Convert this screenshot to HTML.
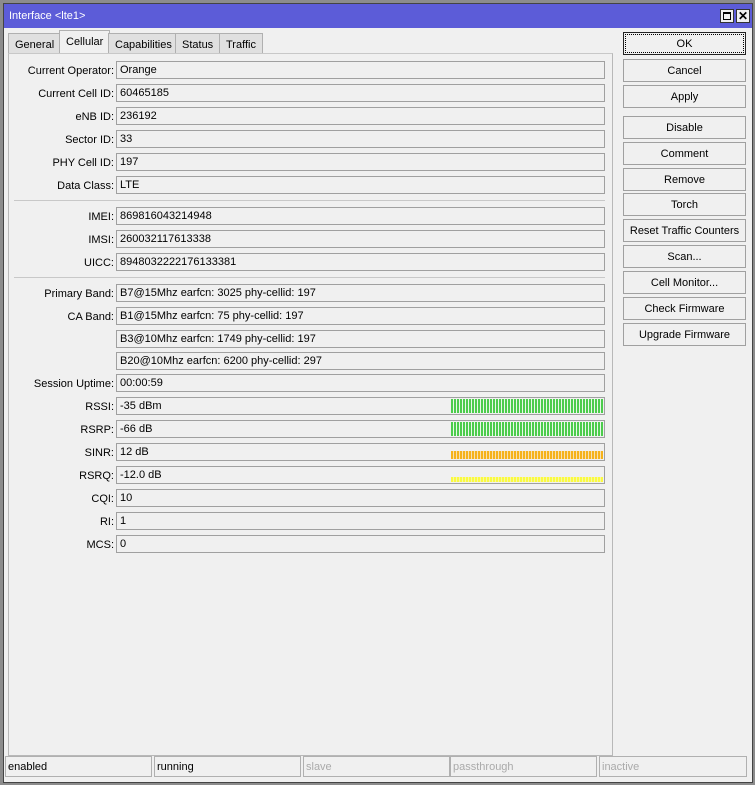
<!DOCTYPE html>
<html><head><style>
*{box-sizing:border-box;margin:0;padding:0}
body{width:755px;height:785px;background:#8c8c8c;font-family:"Liberation Sans",sans-serif;font-size:11px;color:#000;position:relative;overflow:hidden}
.win{position:absolute;left:3px;top:3px;width:750px;height:780px;background:#f0f0f0;border:1px solid #444}
.title{position:absolute;left:0;top:0;width:748px;height:24px;background:#5c5cd8;color:#fff;font-size:11px;padding:6px 0 0 5px}
.tb{position:absolute;top:5px;width:14px;height:14px;background:#f0f0f0;border:1px solid #333}
.tab{position:absolute;top:29px;height:21px;background:#e0e0e0;border:1px solid #b0b0b0;border-bottom:none;padding:5px 6px 0;font-size:11px}
.tab.act{top:26px;height:24px;background:#f0f0f0;padding-top:5px}
.panel{position:absolute;left:4px;top:49px;width:605px;height:703px;border:1px solid #b8b8b8;border-top:1px solid #c8c8c8}
.lbl{position:absolute;width:105px;text-align:right;font-size:11px;left:0}
.fld{position:absolute;left:107px;width:489px;height:18px;border:1px solid #a0a0a0;background:#f0f0f0;padding:2px 3px;font-size:11px;white-space:nowrap}
.sep{position:absolute;left:5px;width:591px;height:1px;background:#c8c8c8}
.btn{position:absolute;left:619px;width:123px;height:23px;border:1px solid #a0a0a0;background:#f0f0f0;text-align:center;padding-top:5px;font-size:11px}
.sb{position:absolute;top:752px;height:21px;border:1px solid #b0b0b0;padding:4px 2px;font-size:11px}
.bar{position:absolute;right:1px;width:152px}
</style></head><body>
<div class="win">
<div class="title">Interface &lt;lte1&gt;</div>
<div class="tb" style="left:716px"><div style="position:absolute;left:2px;top:2px;width:8px;height:8px;border:1px solid #000;border-top-width:2px"></div></div>
<div class="tb" style="left:732px;font-weight:bold;font-size:12px;line-height:12px;text-align:center">✕</div>
<div class="tab" style="left:4px">General</div>
<div class="tab act" style="left:55px">Cellular</div>
<div class="tab" style="left:104px">Capabilities</div>
<div class="tab" style="left:171px">Status</div>
<div class="tab" style="left:215px">Traffic</div>
<div class="panel">
<div class="lbl" style="top:11px">Current Operator:</div><div class="fld" style="top:7px">Orange</div>
<div class="lbl" style="top:34px">Current Cell ID:</div><div class="fld" style="top:30px">60465185</div>
<div class="lbl" style="top:57px">eNB ID:</div><div class="fld" style="top:53px">236192</div>
<div class="lbl" style="top:80px">Sector ID:</div><div class="fld" style="top:76px">33</div>
<div class="lbl" style="top:103px">PHY Cell ID:</div><div class="fld" style="top:99px">197</div>
<div class="lbl" style="top:126px">Data Class:</div><div class="fld" style="top:122px">LTE</div>
<div class="sep" style="top:146px"></div>
<div class="lbl" style="top:157px">IMEI:</div><div class="fld" style="top:153px">869816043214948</div>
<div class="lbl" style="top:180px">IMSI:</div><div class="fld" style="top:176px">260032117613338</div>
<div class="lbl" style="top:203px">UICC:</div><div class="fld" style="top:199px">8948032222176133381</div>
<div class="sep" style="top:223px"></div>
<div class="lbl" style="top:234px">Primary Band:</div><div class="fld" style="top:230px">B7@15Mhz earfcn: 3025 phy-cellid: 197</div>
<div class="lbl" style="top:257px">CA Band:</div><div class="fld" style="top:253px">B1@15Mhz earfcn: 75 phy-cellid: 197</div>
<div class="fld" style="top:276px">B3@10Mhz earfcn: 1749 phy-cellid: 197</div>
<div class="fld" style="top:298px">B20@10Mhz earfcn: 6200 phy-cellid: 297</div>
<div class="lbl" style="top:324px">Session Uptime:</div><div class="fld" style="top:320px">00:00:59</div>
<div class="lbl" style="top:347px">RSSI:</div><div class="fld" style="top:343px">-35 dBm<div class="bar" style="top:1px;height:14px;background:repeating-linear-gradient(90deg,#4ccc4c 0 2px,#e8f8e8 2px 3px)"></div></div>
<div class="lbl" style="top:370px">RSRP:</div><div class="fld" style="top:366px">-66 dB<div class="bar" style="top:1px;height:14px;background:repeating-linear-gradient(90deg,#4ccc4c 0 2px,#e8f8e8 2px 3px)"></div></div>
<div class="lbl" style="top:393px">SINR:</div><div class="fld" style="top:389px">12 dB<div class="bar" style="top:7px;height:8px;background:repeating-linear-gradient(90deg,#f5b21a 0 2px,#f8e0b0 2px 3px)"></div></div>
<div class="lbl" style="top:416px">RSRQ:</div><div class="fld" style="top:412px">-12.0 dB<div class="bar" style="top:10px;height:5px;background:repeating-linear-gradient(90deg,#fafa40 0 2px,#f8f8a0 2px 3px)"></div></div>
<div class="lbl" style="top:439px">CQI:</div><div class="fld" style="top:435px">10</div>
<div class="lbl" style="top:462px">RI:</div><div class="fld" style="top:458px">1</div>
<div class="lbl" style="top:485px">MCS:</div><div class="fld" style="top:481px">0</div>
</div>
<div class="btn" style="top:28px;border:1px solid #222;outline:1px dotted #000;outline-offset:-3px">OK</div>
<div class="btn" style="top:55px">Cancel</div>
<div class="btn" style="top:81px">Apply</div>
<div class="btn" style="top:112px">Disable</div>
<div class="btn" style="top:138px">Comment</div>
<div class="btn" style="top:164px">Remove</div>
<div class="btn" style="top:189px">Torch</div>
<div class="btn" style="top:215px">Reset Traffic Counters</div>
<div class="btn" style="top:241px">Scan...</div>
<div class="btn" style="top:267px">Cell Monitor...</div>
<div class="btn" style="top:293px">Check Firmware</div>
<div class="btn" style="top:319px">Upgrade Firmware</div>
<div class="sb" style="left:1px;width:147px">enabled</div>
<div class="sb" style="left:150px;width:147px">running</div>
<div class="sb" style="left:299px;width:147px;color:#aaa">slave</div>
<div class="sb" style="left:446px;width:147px;color:#aaa">passthrough</div>
<div class="sb" style="left:595px;width:148px;color:#aaa">inactive</div>
</div>
</body></html>
